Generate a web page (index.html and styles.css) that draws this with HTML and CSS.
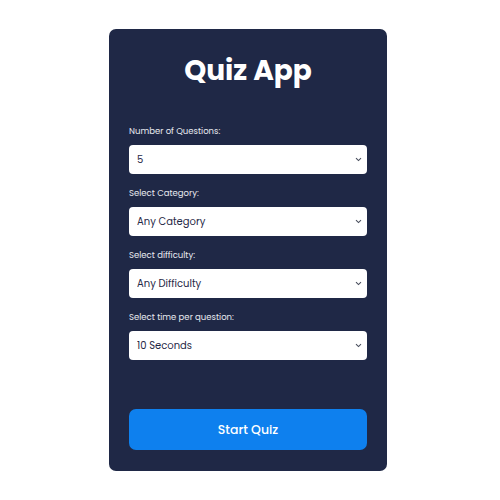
FILE: index.html
```html
<!DOCTYPE html>
<html>
<head>
<meta charset="utf-8">
<link rel="stylesheet" href="styles.css">
</head>
<body>
<div class="card">
  <h1 class="title">Quiz App</h1>
  <div class="fields">
    <div class="field">
      <label class="label">Number of Questions:</label>
      <div class="select-wrap">
        <select class="select"><option>5</option></select>
        <svg class="chev" width="7" height="5" viewBox="0 0 7 5"><path d="M1 1.2 L3.5 3.6 L6 1.2" fill="none" stroke="#4a4f5e" stroke-width="1.1"/></svg>
      </div>
    </div>
    <div class="field">
      <label class="label">Select Category:</label>
      <div class="select-wrap">
        <select class="select"><option>Any Category</option></select>
        <svg class="chev" width="7" height="5" viewBox="0 0 7 5"><path d="M1 1.2 L3.5 3.6 L6 1.2" fill="none" stroke="#4a4f5e" stroke-width="1.1"/></svg>
      </div>
    </div>
    <div class="field">
      <label class="label">Select difficulty:</label>
      <div class="select-wrap">
        <select class="select"><option>Any Difficulty</option></select>
        <svg class="chev" width="7" height="5" viewBox="0 0 7 5"><path d="M1 1.2 L3.5 3.6 L6 1.2" fill="none" stroke="#4a4f5e" stroke-width="1.1"/></svg>
      </div>
    </div>
    <div class="field">
      <label class="label">Select time per question:</label>
      <div class="select-wrap">
        <select class="select"><option>10 Seconds</option></select>
        <svg class="chev" width="7" height="5" viewBox="0 0 7 5"><path d="M1 1.2 L3.5 3.6 L6 1.2" fill="none" stroke="#4a4f5e" stroke-width="1.1"/></svg>
      </div>
    </div>
  </div>
  <button class="start">Start Quiz</button>
</div>
</body>
</html>
```
FILE: styles.css
```css
html, body {
  margin: 0;
  padding: 0;
  background: #ffffff;
}
body {
  font-family: "Poppins", "Open Sans", "Noto Sans", sans-serif;
}
.card {
  box-sizing: border-box;
  width: 278px;
  height: 442px;
  margin: 29px 0 0 109px;
  padding: 0 20px;
  background: #1f2846;
  border-radius: 7px;
  display: flex;
  flex-direction: column;
}
.title {
  margin: 22px 0 0;
  height: 40px;
  line-height: 40px;
  text-align: center;
  color: #ffffff;
  font-size: 28px;
  font-weight: 700;
}
.fields {
  margin-top: 34px;
  display: flex;
  flex-direction: column;
  gap: 13px;
}
.field {
  display: flex;
  flex-direction: column;
  gap: 8px;
}
.label {
  color: #e8eaf0;
  font-size: 8.5px;
  line-height: 12px;
}
.select-wrap {
  position: relative;
}
.select {
  box-sizing: border-box;
  display: block;
  width: 100%;
  height: 29px;
  border: none;
  border-radius: 4px;
  background: #ffffff;
  color: #1f2846;
  font-family: inherit;
  font-size: 10px;
  padding: 0 8px;
  outline: none;
  -webkit-appearance: none;
  appearance: none;
}
.chev {
  position: absolute;
  right: 5px;
  top: 12px;
  pointer-events: none;
}
.start {
  margin-top: 49px;
  height: 41px;
  border: none;
  border-radius: 7px;
  background: #0e80ee;
  color: #ffffff;
  font-family: inherit;
  font-size: 12.5px;
  font-weight: 500;
}
```
